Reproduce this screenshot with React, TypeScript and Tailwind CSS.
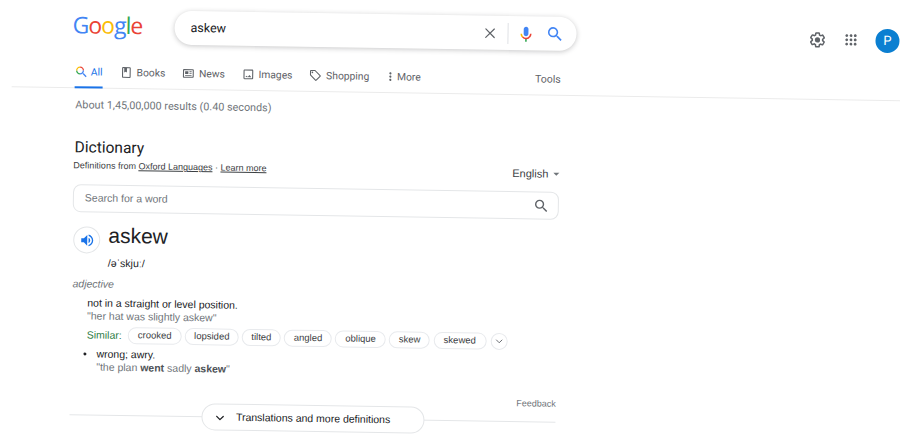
import { ChevronDown, X } from 'lucide-react';

const chips = [
  { label: 'crooked', w: 'w-[54px]' },
  { label: 'lopsided', w: 'w-[54px]' },
  { label: 'tilted', w: 'w-[39px]' },
  { label: 'angled', w: 'w-[48px]' },
  { label: 'oblique', w: 'w-[51px]' },
  { label: 'skew', w: 'w-[41px]' },
  { label: 'skewed', w: 'w-[53px]' },
];

function SearchGlass({ className, color }: { className: string; color: string }) {
  return (
    <svg viewBox="0 0 24 24" className={className} fill={color}>
      <path d="M15.5 14h-.79l-.28-.27A6.471 6.471 0 0 0 16 9.5 6.5 6.5 0 1 0 9.5 16c1.61 0 3.09-.59 4.23-1.57l.27.28v.79l5 4.99L20.49 19l-4.99-5zm-6 0C7.01 14 5 11.99 5 9.5S7.01 5 9.5 5 14 7.01 14 9.5 11.99 14 9.5 14z" />
    </svg>
  );
}

function TabAll() {
  return (
    <svg viewBox="0 0 24 24" className="w-[13px] h-[13px]" fill="none" strokeWidth="2.4">
      <path d="M15.2 15.2 L21 21" stroke="#4285f4" />
      <path d="M9.5 3.5 A6.2 6.2 0 0 1 15.7 9.7" stroke="#ea4335" />
      <path d="M15.7 9.7 A6.2 6.2 0 0 1 9.5 15.9" stroke="#4285f4" />
      <path d="M9.5 15.9 A6.2 6.2 0 0 1 3.3 9.7" stroke="#34a853" />
      <path d="M3.3 9.7 A6.2 6.2 0 0 1 9.5 3.5" stroke="#fbbc05" />
    </svg>
  );
}

function TabBooks() {
  return (
    <svg viewBox="0 0 24 24" className="w-[13px] h-[13px]" fill="#5f6368">
      <path d="M18 2H6c-1.1 0-2 .9-2 2v16c0 1.1.9 2 2 2h12c1.1 0 2-.9 2-2V4c0-1.1-.9-2-2-2zm0 18H6V4h2v8l2.5-1.5L13 12V4h5v16z" />
    </svg>
  );
}

function TabNews() {
  return (
    <svg viewBox="0 0 24 24" className="w-[13px] h-[13px]" fill="#5f6368">
      <path d="M20 4H4c-1.1 0-2 .9-2 2v12c0 1.1.9 2 2 2h16c1.1 0 2-.9 2-2V6c0-1.1-.9-2-2-2zm0 14H4V6h16v12zM6 8h6v5H6V8zm8 0h4v1.5h-4V8zm0 3h4v1.5h-4V11zm-8 4h12v1.5H6V15z" />
    </svg>
  );
}

function TabImages() {
  return (
    <svg viewBox="0 0 24 24" className="w-[13px] h-[13px]" fill="#5f6368">
      <path d="M19 3H5c-1.1 0-2 .9-2 2v14c0 1.1.9 2 2 2h14c1.1 0 2-.9 2-2V5c0-1.1-.9-2-2-2zm0 16H5V5h14v14zm-5-6-3 3.7-2-2.4L6.5 17h11L14 13z" />
    </svg>
  );
}

function TabShopping() {
  return (
    <svg viewBox="0 0 24 24" className="w-[13px] h-[13px]" fill="#5f6368">
      <path d="M21.4 11.6 12.4 2.6C12 2.2 11.5 2 11 2H4c-1.1 0-2 .9-2 2v7c0 .6.2 1.1.6 1.4l9 9c.4.4.9.6 1.4.6s1.1-.2 1.4-.6l7-7c.4-.4.6-.9.6-1.4s-.2-1.1-.6-1.4zM13 20l-9-9V4h7l9 9-7 7z" />
      <circle cx="6.5" cy="6.5" r="1.5" />
    </svg>
  );
}

function TabMore() {
  return (
    <svg viewBox="0 0 24 24" className="w-[13px] h-[13px]" fill="#5f6368">
      <path d="M12 8c1.1 0 2-.9 2-2s-.9-2-2-2-2 .9-2 2 .9 2 2 2zm0 2c-1.1 0-2 .9-2 2s.9 2 2 2 2-.9 2-2-.9-2-2-2zm0 6c-1.1 0-2 .9-2 2s.9 2 2 2 2-.9 2-2-.9-2-2-2z" />
    </svg>
  );
}

function Mic() {
  return (
    <svg viewBox="0 0 24 24" className="w-[19px] h-[19px]">
      <path fill="#4285f4" d="M12 15c1.66 0 3-1.31 3-2.97V5.97C15 4.31 13.66 3 12 3S9 4.31 9 5.97v6.06C9 13.69 10.34 15 12 15z" />
      <path fill="#34a853" d="M11 18.1h2V22h-2z" />
      <path fill="#fbbc05" d="M7.05 16.87A7 7 0 0 1 5 12h2a5 5 0 0 0 1.46 3.46z" />
      <path fill="#ea4335" d="M12 17a5 5 0 0 1-3.54-1.54L7.05 16.87A7 7 0 0 0 12 19a7 7 0 0 0 4.95-2.13l-1.41-1.41A5 5 0 0 1 12 17z" />
      <path fill="#ea4335" d="M17 12a5 5 0 0 1-1.46 3.46l1.41 1.41A7 7 0 0 0 19 12z" />
    </svg>
  );
}

function Gear() {
  return (
    <svg viewBox="0 0 24 24" className="w-[18px] h-[18px]" fill="#5f6368">
      <path d="M13.85 22.25h-3.7c-.74 0-1.36-.54-1.45-1.27l-.27-1.89c-.27-.14-.53-.29-.79-.46l-1.8.72c-.7.26-1.47-.03-1.81-.65L2.2 15.53c-.35-.66-.2-1.44.36-1.88l1.53-1.19c-.01-.15-.02-.3-.02-.46 0-.15.01-.31.02-.46l-1.52-1.19c-.59-.45-.74-1.26-.37-1.88l1.85-3.19c.34-.62 1.11-.9 1.79-.63l1.81.73c.26-.17.52-.32.78-.46l.27-1.91c.09-.7.71-1.25 1.44-1.25h3.7c.74 0 1.36.54 1.45 1.27l.27 1.89c.27.14.53.29.79.46l1.8-.72c.71-.26 1.48.03 1.82.65l1.84 3.18c.36.66.2 1.44-.36 1.88l-1.52 1.19c.01.15.02.3.02.46s-.01.31-.02.46l1.52 1.19c.56.45.72 1.23.37 1.86l-1.86 3.22c-.34.62-1.11.9-1.8.63l-1.8-.72c-.26.17-.52.32-.78.46l-.27 1.91c-.1.68-.72 1.22-1.46 1.22zm-3.23-2h2.76l.37-2.55.53-.22c.44-.18.88-.44 1.34-.78l.45-.34 2.38.96 1.38-2.4-2.03-1.58.07-.56c.03-.26.06-.51.06-.78s-.03-.53-.06-.78l-.07-.56 2.03-1.58-1.39-2.4-2.39.96-.45-.35c-.42-.32-.87-.58-1.33-.77l-.52-.22-.37-2.55h-2.76l-.37 2.55-.53.21c-.44.19-.88.44-1.34.79l-.45.33-2.38-.95-1.39 2.39 2.03 1.58-.07.56c-.03.26-.06.53-.06.79s.02.53.06.78l.07.56-2.03 1.58 1.38 2.4 2.39-.96.45.35c.43.33.86.58 1.33.77l.53.22.38 2.55z" />
      <circle cx="12" cy="12" r="3.5" />
    </svg>
  );
}

function Apps() {
  return (
    <svg viewBox="0 0 24 24" className="w-[17px] h-[17px]" fill="#5f6368">
      <path d="M6 8c1.1 0 2-.9 2-2s-.9-2-2-2-2 .9-2 2 .9 2 2 2zm6 12c1.1 0 2-.9 2-2s-.9-2-2-2-2 .9-2 2 .9 2 2 2zm-6 0c1.1 0 2-.9 2-2s-.9-2-2-2-2 .9-2 2 .9 2 2 2zm0-6c1.1 0 2-.9 2-2s-.9-2-2-2-2 .9-2 2 .9 2 2 2zm6 0c1.1 0 2-.9 2-2s-.9-2-2-2-2 .9-2 2 .9 2 2 2zm4-8c0 1.1.9 2 2 2s2-.9 2-2-.9-2-2-2-2 .9-2 2zm-4 2c1.1 0 2-.9 2-2s-.9-2-2-2-2 .9-2 2 .9 2 2 2zm6 6c1.1 0 2-.9 2-2s-.9-2-2-2-2 .9-2 2 .9 2 2 2zm0 6c1.1 0 2-.9 2-2s-.9-2-2-2-2 .9-2 2 .9 2 2 2z" />
    </svg>
  );
}

function Speaker() {
  return (
    <svg viewBox="0 0 24 24" className="w-[16px] h-[16px]" fill="#1a73e8">
      <path d="M3 9v6h4l5 5V4L7 9H3zm13.5 3A4.5 4.5 0 0 0 14 7.97v8.05c1.48-.73 2.5-2.25 2.5-4.02z" />
      <path d="M14 3.23v2.06c2.89.86 5 3.54 5 6.71s-2.11 5.85-5 6.71v2.06c4.01-.91 7-4.49 7-8.77s-2.99-7.86-7-8.77z" />
    </svg>
  );
}

const tabs = [
  { label: 'Books', icon: <TabBooks /> },
  { label: 'News', icon: <TabNews /> },
  { label: 'Images', icon: <TabImages /> },
  { label: 'Shopping', icon: <TabShopping /> },
];

export default function App() {
  return (
    <div className="w-[900px] h-[435px] overflow-hidden bg-white font-['Liberation_Sans',sans-serif] text-[#202124]">
      <div className="w-[930px] origin-top-left rotate-[0.9deg]">
        {/* Header */}
        <div className="h-[50px] pt-2 pl-[76px] flex items-start">
          <div className="w-[99px] h-[34px] flex items-center">
            <span className="font-['Open_Sans',sans-serif] font-medium text-[23px] leading-none tracking-[-1px] -mt-[3px] -ml-[3px]">
              <span className="text-[#4285f4]">G</span>
              <span className="text-[#ea4335]">o</span>
              <span className="text-[#fbbc05]">o</span>
              <span className="text-[#4285f4]">g</span>
              <span className="text-[#34a853]">l</span>
              <span className="text-[#ea4335]">e</span>
            </span>
          </div>
          <div className="w-[402px] h-[34px] rounded-full bg-white shadow-[0_1px_5px_rgba(32,33,36,0.25)] flex items-center pl-[16px] pr-[12px]">
            <span className="font-['Roboto',sans-serif] text-[12.5px] flex-1">askew</span>
            <X className="w-[17px] h-[17px] text-[#5f6368]" strokeWidth={1.7} />
            <div className="w-px h-[21px] bg-[#dfe1e5] ml-[9px] mr-[8px]" />
            <Mic />
            <SearchGlass className="w-[19px] h-[19px] ml-[10px]" color="#4285f4" />
          </div>
          <div className="ml-[232px] h-[37px] flex items-center">
            <Gear />
            <div className="ml-[16px]">
              <Apps />
            </div>
            <div className="ml-[16px] w-6 h-6 rounded-full bg-[#0b7fd1] text-white text-[13px] flex items-center justify-center font-['Roboto',sans-serif]">
              P
            </div>
          </div>
        </div>

        {/* Tabs */}
        <div className="ml-[13px] h-[37px] border-b border-[#ebebeb] pl-[63px]">
          <div className="w-[486px] h-[37px] flex items-center justify-between font-['Roboto',sans-serif] text-[10.3px] text-[#5f6368]">
            <div className="flex gap-[16.7px] h-full">
              <div className="relative w-[28px] flex items-center gap-[3px] pt-[4px] text-[#1a73e8]">
                <TabAll />
                <span>All</span>
                <div className="absolute left-0 right-0 bottom-0 h-[2px] bg-[#1a73e8]" />
              </div>
              {tabs.map((tab) => (
                <div key={tab.label} className="flex items-center gap-[4px] pt-[4px]">
                  {tab.icon}
                  <span>{tab.label}</span>
                </div>
              ))}
              <div className="flex items-center -ml-[2px] pt-[4px]">
                <TabMore />
                <span>More</span>
              </div>
            </div>
            <span className="pt-[4px] text-[10.5px]">Tools</span>
          </div>
        </div>

        {/* Results */}
        <div className="pl-[77px] w-[562px]">
          <div className="mt-[10px] h-[14px] leading-[14px] text-[10.8px] font-['Roboto',sans-serif] text-[#70757a]">
            About 1,45,00,000 results (0.40 seconds)
          </div>

          <div className="mt-[25px] h-[20px] leading-[20px] text-[15.5px] font-['Roboto',sans-serif]">Dictionary</div>

          <div className="mt-[1px] h-[16px] flex items-center justify-between">
            <div className="text-[9px] text-[#3c4043] -ml-[1px]">
              Definitions from <span className="underline">Oxford Languages</span> · <span className="underline">Learn more</span>
            </div>
            <div className="flex items-center gap-[5px] text-[11px] text-[#3c4043]">
              English
              <span className="w-0 h-0 border-x-[3px] border-x-transparent border-t-[3px] border-t-[#70757a]" />
            </div>
          </div>

          <div className="mt-[10px] h-[28px] -ml-[1px] rounded-[8px] border border-[#e4e6e8] flex items-center justify-between pl-[11px] pr-[8px]">
            <span className="text-[10.5px] text-[#70757a]">Search for a word</span>
            <SearchGlass className="w-[17px] h-[17px]" color="#5f6368" />
          </div>

          <div className="mt-[13px] h-[30px] flex items-start">
            <div className="w-[27px] h-[27px] mt-[1px] rounded-full border border-[#e4e6e8] flex items-center justify-center">
              <Speaker />
            </div>
            <span className="ml-[8px] text-[21px] leading-[22px] -mt-[1px]">askew</span>
          </div>

          <div className="mt-[1px] pl-[35px] h-[12px] leading-[12px] text-[10.5px] text-[#202124]">/əˈskjuː/</div>
          <div className="mt-[9px] h-[13px] leading-[13px] text-[10.5px] italic text-[#70757a]">adjective</div>

          <div className="mt-[6px] pl-[15px] text-[10.5px] leading-[12.5px]">
            <div>not in a straight or level position.</div>
            <div className="text-[#70757a]">"her hat was slightly askew"</div>
            <div className="mt-[4px] flex items-center h-[18px] text-[9.5px]">
              <span className="w-[41px] text-[10.5px] text-[#2e7d45]">Similar:</span>
              <div className="flex gap-[3.1px] items-center text-[#3c4043]">
                {chips.map((chip) => (
                  <div
                    key={chip.label}
                    className={`${chip.w} h-[17px] rounded-full border border-[#e8eaed] flex items-center justify-center`}
                  >
                    {chip.label}
                  </div>
                ))}
                <div className="ml-[1px] w-[17px] h-[17px] rounded-full border border-[#e8eaed] flex items-center justify-center">
                  <ChevronDown className="w-[11px] h-[11px] text-[#5f6368]" />
                </div>
              </div>
            </div>
            <div className="mt-[4px] relative pl-[10px] leading-[13px]">
              <span className="absolute left-[-3px] top-[5px] w-[3px] h-[3px] rounded-full bg-[#202124]" />
              <div>wrong; awry.</div>
              <div className="text-[#70757a]">
                "the plan <b className="text-[#4d5156]">went</b> sadly <b className="text-[#4d5156]">askew</b>"
              </div>
            </div>
          </div>

          <div className="mt-[18px] h-[10px] leading-[10px] text-right text-[9px] text-[#70757a]">Feedback</div>

          {/* Expander */}
          <div className="relative h-[27px] flex items-center justify-center -ml-[1px]">
            <div className="absolute left-0 right-0 top-[13px] h-px bg-[#e4e6e8]" />
            <div className="relative w-[223px] h-[27px] rounded-full border border-[#e4e6e8] bg-white flex items-center pl-[11px] pt-[1px] gap-[10px] text-[10.5px]">
              <ChevronDown className="w-[13px] h-[13px]" strokeWidth={2.4} />
              <span>Translations and more definitions</span>
            </div>
          </div>
        </div>
      </div>
    </div>
  );
}
